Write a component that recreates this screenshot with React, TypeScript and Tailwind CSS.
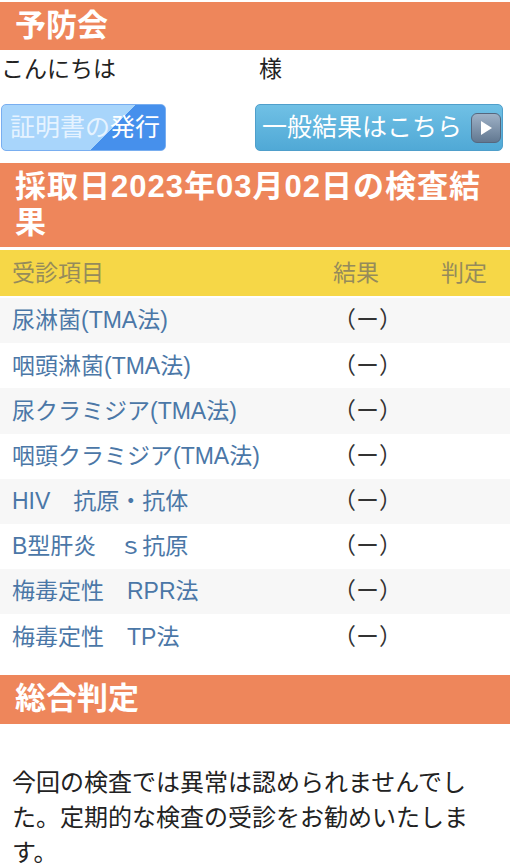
import React from "react";

const rows = [
  "尿淋菌(TMA法)",
  "咽頭淋菌(TMA法)",
  "尿クラミジア(TMA法)",
  "咽頭クラミジア(TMA法)",
  "HIV　抗原・抗体",
  "B型肝炎　ｓ抗原",
  "梅毒定性　RPR法",
  "梅毒定性　TP法",
];

export default function App() {
  return (
    <div
      className="w-[510px] min-h-[863px] bg-white overflow-hidden"
      style={{ fontFamily: '"Liberation Sans", "Noto Sans CJK JP", sans-serif' }}
    >
      <div className="mt-[2px] h-[48px] bg-[#ee865b] pl-[15px] flex items-center">
        <h1 className="text-[31px] leading-[36px] font-bold text-white">予防会</h1>
      </div>

      <div className="h-[38px] flex items-center text-[23px] text-[#222] pl-[1px]">
        <span className="w-[258px]">こんにちは</span>
        <span>様</span>
      </div>

      <div className="mt-[16px] flex items-start">
        <button className="ml-[1px] w-[165px] h-[47px] rounded-[5px] border border-[#79aef0] bg-[linear-gradient(135deg,#a8d5fb_64%,#4690ec_64%)] text-white text-[25px] leading-none flex items-center pl-[8px]">
          <span className="text-[#e6f3ff]">証明書の</span>
          <span>発行</span>
        </button>
        <button className="ml-[89px] w-[248px] h-[47px] rounded-[5px] border border-[#4f9fcb] bg-[linear-gradient(180deg,#70c0e5,#50a9d6)] text-white text-[25px] leading-none flex items-center pl-[6px]">
          <span>一般結果はこちら</span>
          <span className="ml-[9px] w-[30px] h-[30px] rounded-[6px] border border-[#56677e] bg-[linear-gradient(180deg,#9fb2c7,#627891)] flex items-center justify-center">
            <svg width="16" height="18" viewBox="0 0 16 18">
              <path d="M3 2 L14 9 L3 16 Z" fill="#ffffff" />
            </svg>
          </span>
        </button>
      </div>

      <div className="mt-[12px] bg-[#ee865b] pl-[15px] pr-[20px] pt-[6px] pb-[6px]">
        <h2 className="text-[31px] leading-[36px] font-bold text-white tracking-[1px]">
          採取日2023年03月02日の検査結果
        </h2>
      </div>

      <div className="mt-[3px] h-[46px] bg-[#f6d747] grid grid-cols-[321px_108px_1fr] pl-[12px] items-center text-[23px] text-[#958b5b]">
        <span>受診項目</span>
        <span>結果</span>
        <span>判定</span>
      </div>

      <div className="mt-[2px]">
        {rows.map((r, i) => (
          <div
            key={r}
            className={`h-[45.2px] grid grid-cols-[321px_108px_1fr] pl-[12px] items-center text-[23px] ${
              i % 2 === 0 ? "bg-[#f7f7f7]" : "bg-white"
            }`}
          >
            <span className="text-[#4b77a7] whitespace-nowrap">{r}</span>
            <span className="text-[#333]">（ー）</span>
            <span></span>
          </div>
        ))}
      </div>

      <div className="mt-[15px] h-[49px] bg-[#ee865b] pl-[15px] flex items-center">
        <h2 className="text-[31px] leading-[36px] font-bold text-white">総合判定</h2>
      </div>

      <p className="mt-[41px] pl-[12px] pr-[20px] text-[24px] leading-[35px] text-[#222]">
        今回の検査では異常は認められませんでした。定期的な検査の受診をお勧めいたします。
      </p>
    </div>
  );
}
